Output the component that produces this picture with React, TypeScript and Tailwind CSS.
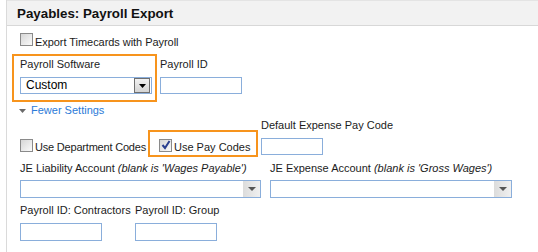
import React from 'react';

function Checkbox({ checked = false }: { checked?: boolean }) {
  return (
    <div className="relative w-[13px] h-[13px] shrink-0 border border-[#8a8a8a] bg-gradient-to-br from-[#d6d6d6] to-[#fbfbfb]">
      {checked && (
        <svg className="absolute left-[1px] top-[0px]" width="10" height="10" viewBox="0 0 10 10">
          <path d="M1.5 5 L4 8 L8.5 1" fill="none" stroke="#2a3f8f" strokeWidth="2" />
        </svg>
      )}
    </div>
  );
}

function TextInput({ w, h = 'h-[17px]' }: { w: string; h?: string }) {
  return <div className={`${w} ${h} border border-[#8aaedb] bg-white`} />;
}

function WideSelect() {
  return (
    <div className="w-full h-[18px] border border-[#8aaedb] bg-white flex justify-end">
      <div className="w-[17px] h-full bg-gradient-to-r from-[#dcdcdc] to-[#f0f0f0] flex items-center justify-center">
        <svg width="8" height="4" viewBox="0 0 8 4">
          <path d="M0 0 H8 L4 4 Z" fill="#555" />
        </svg>
      </div>
    </div>
  );
}

export default function App() {
  return (
    <div className="w-[538px] h-[252px] bg-white overflow-hidden font-['Liberation_Sans',Arial,sans-serif] text-[11px] leading-[13px] text-[#1c1c1c]">
      <div className="ml-[6px] h-full border-l border-[#dadada]">
        <div className="h-[26px] border-t border-b border-t-[#e4e4e4] border-b-[#d8d8d8] bg-[#f2f2f2] pl-[10px] pt-[1px] text-[13.33px] leading-[23px] font-bold text-[#111]">
          Payables: Payroll Export
        </div>

        <div className="pl-[13px]">
          {/* export timecards */}
          <div className="mt-[7px] flex items-start">
            <Checkbox />
            <span className="ml-[2px] mt-[3px] tracking-[-0.05px]">Export Timecards with Payroll</span>
          </div>

          {/* payroll software / id */}
          <div className="mt-[5px] flex items-start">
            <div className="-ml-[8px] w-[145px] border-2 border-[#f7941d] pl-[6px] pr-[3px] pt-[2px] pb-[6px]">
              <div>Payroll Software</div>
              <div className="mt-[6px] w-[132px] h-[17px] border border-[#8aaedb] bg-white flex items-stretch">
                <span className="flex-1 pl-[5px] text-[12px] leading-[15px] text-black">Custom</span>
                <div className="w-[16px] mr-[1px] border border-[#6f6f6f] bg-gradient-to-b from-[#f2f2f2] to-[#d4d4d4] flex items-center justify-center">
                  <svg width="7" height="4" viewBox="0 0 7 4">
                    <path d="M0 0 H7 L3.5 4 Z" fill="#000" />
                  </svg>
                </div>
              </div>
            </div>
            <div className="ml-[3px] pt-[4px]">
              <div>Payroll ID</div>
              <div className="mt-[6px]">
                <TextInput w="w-[82px]" />
              </div>
            </div>
          </div>

          {/* fewer settings */}
          <div className="mt-[2px] flex items-center">
            <svg className="-ml-[1px]" width="7" height="4" viewBox="0 0 7 4">
              <path d="M0 0 H7 L3.5 4 Z" fill="#6a6a6a" />
            </svg>
            <span className="ml-[5px] text-[#2b7bd8]">Fewer Settings</span>
          </div>

          {/* codes row */}
          <div className="mt-[2px] flex items-start">
            <div className="w-[128px] mt-[20px] flex items-start">
              <Checkbox />
              <span className="ml-[2px] mt-[2px] whitespace-nowrap tracking-[-0.2px]">Use Department Codes</span>
            </div>
            <div className="w-[110px] mt-[11px] h-[27px] border-2 border-[#f7941d] pl-[9px] pt-[7px] flex items-start">
              <Checkbox checked />
              <span className="ml-[2px] mt-[2px] whitespace-nowrap">Use Pay Codes</span>
            </div>
            <div className="ml-[3px]">
              <div className="whitespace-nowrap">Default Expense Pay Code</div>
              <div className="mt-[6px]">
                <TextInput w="w-[62px]" />
              </div>
            </div>
          </div>

          {/* JE accounts */}
          <div className="mt-[5px] flex gap-[9px]">
            <div className="w-[241px]">
              <div className="whitespace-nowrap">
                JE Liability Account <i>(blank is 'Wages Payable')</i>
              </div>
              <div className="mt-[5px]">
                <WideSelect />
              </div>
            </div>
            <div className="w-[242px]">
              <div className="whitespace-nowrap">
                JE Expense Account <i>(blank is 'Gross Wages')</i>
              </div>
              <div className="mt-[5px]">
                <WideSelect />
              </div>
            </div>
          </div>

          {/* payroll ids */}
          <div className="mt-[6px] flex">
            <div className="w-[115px]">
              <div className="whitespace-nowrap">Payroll ID: Contractors</div>
              <div className="mt-[6px]">
                <TextInput w="w-[82px]" h="h-[18px]" />
              </div>
            </div>
            <div>
              <div className="whitespace-nowrap">Payroll ID: Group</div>
              <div className="mt-[6px]">
                <TextInput w="w-[82px]" h="h-[18px]" />
              </div>
            </div>
          </div>
        </div>
      </div>
    </div>
  );
}
